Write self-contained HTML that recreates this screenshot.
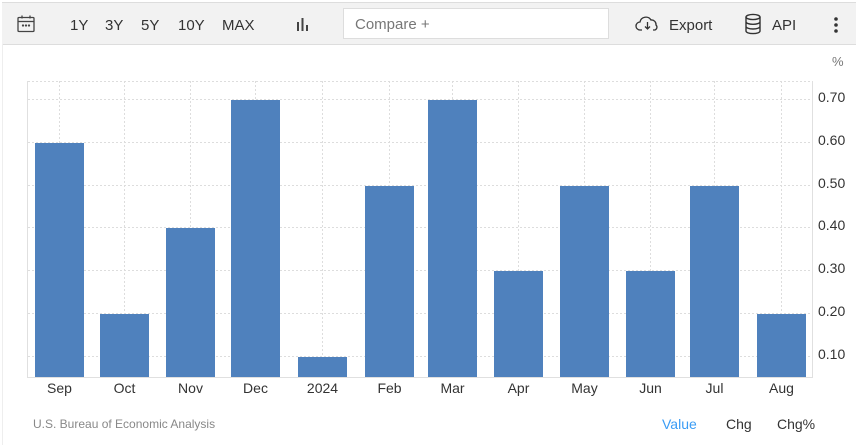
<!DOCTYPE html>
<html><head><meta charset="utf-8"><style>
body{margin:0;width:856px;height:445px;background:#fff;font-family:"Liberation Sans",sans-serif;overflow:hidden;position:relative}
.tb{position:absolute;left:2px;top:2px;width:854px;height:41px;background:#f2f2f2;border-top:1px solid #ddd;border-bottom:1px solid #ddd}
.t{position:absolute;top:14px;font-size:15px;color:#333}
.cmp{position:absolute;left:341px;top:5px;width:266px;height:31px;background:#fff;border:1px solid #ddd;box-sizing:border-box}
.cmp span{position:absolute;left:11px;top:7px;font-size:15px;color:#777}
.lb{position:absolute;left:2px;top:44px;width:1px;height:401px;background:#eee}
</style></head><body>
<div class="tb">
<svg style="position:absolute;left:14px;top:11px" width="20" height="20" viewBox="0 0 20 20" fill="none" stroke="#444" stroke-width="1.3"><rect x="2" y="3.5" width="16" height="14" rx="1"/><line x1="2" y1="7.5" x2="18" y2="7.5"/><line x1="6" y1="1.5" x2="6" y2="4.5"/><line x1="14" y1="1.5" x2="14" y2="4.5"/><circle cx="7" cy="11.5" r=".5" fill="#444"/><circle cx="10" cy="11.5" r=".5" fill="#444"/><circle cx="13" cy="11.5" r=".5" fill="#444"/></svg>
<span class="t" style="left:68px">1Y</span><span class="t" style="left:103px">3Y</span><span class="t" style="left:139px">5Y</span><span class="t" style="left:176px">10Y</span><span class="t" style="left:220px">MAX</span>
<svg style="position:absolute;left:293px;top:13px" width="16" height="16"><rect x="2" y="6" width="2" height="9" fill="#444"/><rect x="6.5" y="2" width="2" height="13" fill="#444"/><rect x="11" y="9" width="2" height="6" fill="#444"/></svg>
<div class="cmp"><span>Compare +</span></div>
<svg style="position:absolute;left:633px;top:12px" width="26" height="18" viewBox="0 0 26 18" fill="none" stroke="#333" stroke-width="1.3"><path d="M7 15H5a4 4 0 0 1 0-8 6 6 0 0 1 11-2 4.5 4.5 0 0 1 5 5 3 3 0 0 1-1 5h-2"/><path d="M12.5 7v7M10 11.5l2.5 2.5 2.5-2.5"/></svg>
<span class="t" style="left:667px">Export</span>
<svg style="position:absolute;left:742px;top:10px" width="18" height="22" viewBox="0 0 18 22" fill="none" stroke="#333" stroke-width="1.4"><ellipse cx="9" cy="4" rx="7" ry="2.6"/><path d="M2 4v14c0 1.5 3 2.6 7 2.6s7-1.1 7-2.6V4M2 8.7c0 1.5 3 2.6 7 2.6s7-1.1 7-2.6M2 13.4c0 1.5 3 2.6 7 2.6s7-1.1 7-2.6"/></svg>
<span class="t" style="left:770px">API</span>
<svg style="position:absolute;left:831px;top:13px" width="6" height="18"><circle cx="3" cy="3" r="1.8" fill="#333"/><circle cx="3" cy="9" r="1.8" fill="#333"/><circle cx="3" cy="15" r="1.8" fill="#333"/></svg>
</div>
<div class="lb"></div>
<svg style="position:absolute;left:0;top:0" width="856" height="445" font-family="Liberation Sans, sans-serif">
<g stroke="#ddd" stroke-dasharray="2,2" stroke-width="1">
<line x1="28" y1="81.5" x2="812" y2="81.5"/>
<line x1="28" y1="99.5" x2="812" y2="99.5"/><line x1="28" y1="142.5" x2="812" y2="142.5"/><line x1="28" y1="185.5" x2="812" y2="185.5"/><line x1="28" y1="227.5" x2="812" y2="227.5"/><line x1="28" y1="270.5" x2="812" y2="270.5"/><line x1="28" y1="313.5" x2="812" y2="313.5"/><line x1="28" y1="356.5" x2="812" y2="356.5"/>
<line x1="59.5" y1="81" x2="59.5" y2="376"/><line x1="124.5" y1="81" x2="124.5" y2="376"/><line x1="190.5" y1="81" x2="190.5" y2="376"/><line x1="255.5" y1="81" x2="255.5" y2="376"/><line x1="322.5" y1="81" x2="322.5" y2="376"/><line x1="389.5" y1="81" x2="389.5" y2="376"/><line x1="452.5" y1="81" x2="452.5" y2="376"/><line x1="518.5" y1="81" x2="518.5" y2="376"/><line x1="584.5" y1="81" x2="584.5" y2="376"/><line x1="650.5" y1="81" x2="650.5" y2="376"/><line x1="714.5" y1="81" x2="714.5" y2="376"/><line x1="781.5" y1="81" x2="781.5" y2="376"/>
</g>
<line x1="27.5" y1="81" x2="27.5" y2="378" stroke="#e0e0e0"/>
<line x1="812.5" y1="81" x2="812.5" y2="378" stroke="#e0e0e0"/>
<line x1="27" y1="377.5" x2="813" y2="377.5" stroke="#e0e0e0"/>
<g fill="#4f81bd">
<rect x="35" y="143" width="49" height="234"/><rect x="100" y="314" width="49" height="63"/><rect x="166" y="228" width="49" height="149"/><rect x="231" y="100" width="49" height="277"/><rect x="298" y="357" width="49" height="20"/><rect x="365" y="186" width="49" height="191"/><rect x="428" y="100" width="49" height="277"/><rect x="494" y="271" width="49" height="106"/><rect x="560" y="186" width="49" height="191"/><rect x="626" y="271" width="49" height="106"/><rect x="690" y="186" width="49" height="191"/><rect x="757" y="314" width="49" height="63"/>
</g>
<g font-size="14" fill="#333">
<text x="818" y="102">0.70</text><text x="818" y="145">0.60</text><text x="818" y="188">0.50</text><text x="818" y="230">0.40</text><text x="818" y="273">0.30</text><text x="818" y="316">0.20</text><text x="818" y="359">0.10</text>
</g>
<text x="832" y="66" font-size="13" fill="#777">%</text>
<g font-size="14" fill="#333" text-anchor="middle">
<text x="59.5" y="393">Sep</text><text x="124.5" y="393">Oct</text><text x="190.5" y="393">Nov</text><text x="255.5" y="393">Dec</text><text x="322.5" y="393">2024</text><text x="389.5" y="393">Feb</text><text x="452.5" y="393">Mar</text><text x="518.5" y="393">Apr</text><text x="584.5" y="393">May</text><text x="650.5" y="393">Jun</text><text x="714.5" y="393">Jul</text><text x="781.5" y="393">Aug</text>
</g>
<text x="33" y="428" font-size="12" fill="#888">U.S. Bureau of Economic Analysis</text>
<text x="662" y="429" font-size="14" fill="#3a9cf5">Value</text>
<text x="726" y="429" font-size="14" fill="#333">Chg</text>
<text x="777" y="429" font-size="14" fill="#333">Chg%</text>
</svg>
</body></html>
